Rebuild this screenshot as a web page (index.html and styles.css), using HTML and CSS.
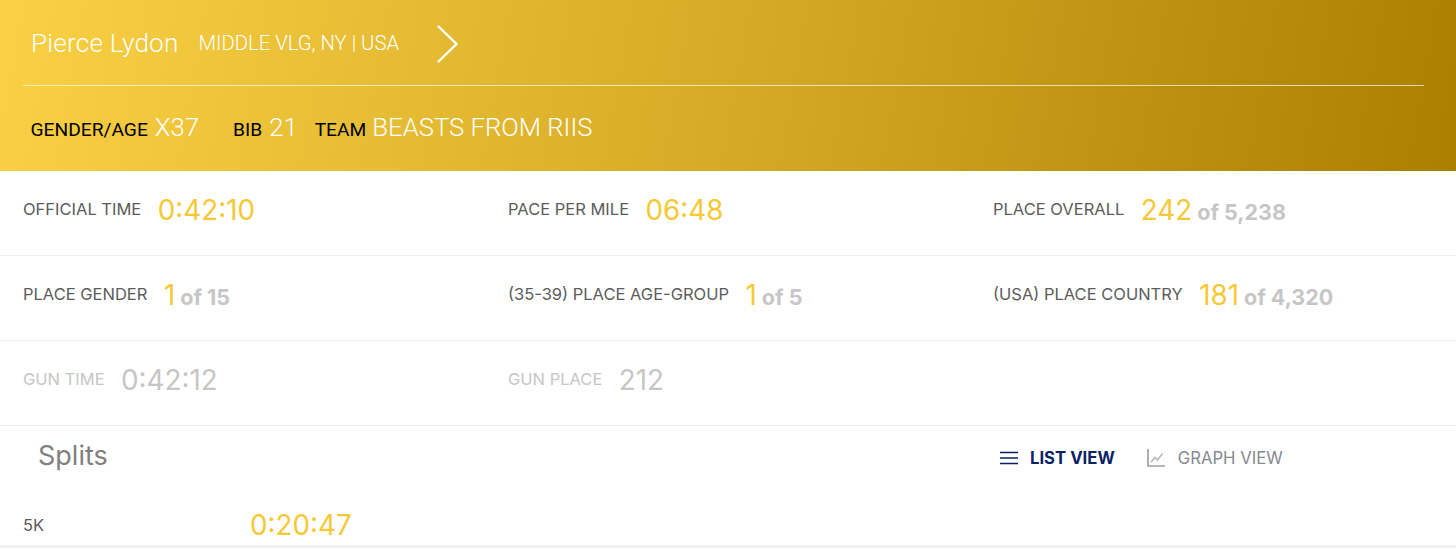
FILE: index.html
```html
<!DOCTYPE html>
<html lang="en">
<head>
<meta charset="utf-8">
<title>Pierce Lydon</title>
<link rel="stylesheet" href="styles.css">
</head>
<body>
<header class="hero">
  <div class="hero-top">
    <span class="name">Pierce Lydon</span>
    <span class="place">MIDDLE VLG, NY | USA</span>
    <svg class="chev" width="24" height="40" viewBox="0 0 24 40"><path d="M2.5 2.5 L20.5 20 L2.5 37.5" fill="none" stroke="#fff" stroke-width="2.4" stroke-linecap="round" stroke-linejoin="miter"/></svg>
  </div>
  <div class="hero-bottom">
    <span class="k">GENDER/AGE</span><span class="v v-age">X37</span>
    <span class="k">BIB</span><span class="v v-bib">21</span>
    <span class="k k-team">TEAM</span><span class="v">BEASTS FROM RIIS</span>
  </div>
</header>
<section class="stats">
  <div class="row">
    <div class="cell"><span class="label">OFFICIAL TIME</span><span class="val"><span class="num">0:42:10</span></span></div>
    <div class="cell"><span class="label">PACE PER MILE</span><span class="val"><span class="num">06:48</span></span></div>
    <div class="cell"><span class="label">PLACE OVERALL</span><span class="val"><span class="num">242</span><span class="of">of 5,238</span></span></div>
  </div>
  <div class="row">
    <div class="cell"><span class="label">PLACE GENDER</span><span class="val"><span class="num">1</span><span class="of">of 15</span></span></div>
    <div class="cell"><span class="label">(35-39) PLACE AGE-GROUP</span><span class="val"><span class="num">1</span><span class="of">of 5</span></span></div>
    <div class="cell"><span class="label">(USA) PLACE COUNTRY</span><span class="val"><span class="num">181</span><span class="of">of 4,320</span></span></div>
  </div>
  <div class="row muted">
    <div class="cell"><span class="label">GUN TIME</span><span class="val"><span class="num">0:42:12</span></span></div>
    <div class="cell"><span class="label">GUN PLACE</span><span class="val"><span class="num">212</span></span></div>
    <div class="cell"></div>
  </div>
</section>
<section class="splits">
  <div class="splits-head">
    <h2 class="title">Splits</h2>
    <div class="views">
      <span class="view active">
        <svg width="18" height="14" viewBox="0 0 18 14"><path d="M0 1.5H18M0 7H18M0 12.5H18" stroke="#0b2265" stroke-width="1.6" fill="none"/></svg>
        LIST VIEW
      </span>
      <span class="view">
        <svg width="18" height="18" viewBox="0 0 18 18"><path d="M1 0V17H18" stroke="#a0a0a0" stroke-width="1.7" fill="none"/><path d="M4 13L8 8.5L10.5 11L15.5 4.5" stroke="#b8b8b8" stroke-width="1.6" fill="none"/></svg>
        GRAPH VIEW
      </span>
    </div>
  </div>
  <div class="split-row">
    <span class="split-name">5K</span>
    <span class="split-time">0:20:47</span>
  </div>
</section>
</body>
</html>
```
FILE: styles.css
```css
* { box-sizing: border-box; }
html, body { margin: 0; padding: 0; }
body {
  width: 1456px;
  height: 550px;
  overflow: hidden;
  background: #fff;
  font-family: Inter, "Liberation Sans", sans-serif;
}
.hero {
  height: 171px;
  padding: 0 32px 0 23px;
  background: linear-gradient(100deg, #fad044 0%, #d9af2a 45%, #ab7f00 100%);
  color: #fff;
  font-family: Roboto, "Liberation Sans", sans-serif;
}
.hero-top {
  height: 86px;
  padding: 0 0 0 8px;
  display: flex;
  align-items: center;
  border-bottom: 1px solid rgba(255, 255, 255, 0.65);
}
.name { font-size: 26.1px; font-weight: 350; letter-spacing: 0.2px; margin-right: 20px; }
.place { font-size: 20.3px; font-weight: 350; margin-right: 37px; }
.chev { display: block; margin-top: 2px; }
.hero-bottom {
  height: 84px;
  padding: 0 0 0 7.5px;
  display: flex;
  align-items: baseline;
  line-height: 82px;
}
.k { font-size: 19.2px; font-weight: 400; color: #000; margin-right: 7px; }
.k-team { margin-right: 6px; }
.v { font-size: 25.7px; font-weight: 350; }
.v-age { margin-right: 34px; }
.v-bib { margin-right: 17px; }
.row {
  display: grid;
  grid-template-columns: 485px 485px 1fr;
  height: 85px;
  padding: 0 23px;
  border-bottom: 1px solid #eff0f3;
  align-items: center;
}
.cell { display: flex; align-items: center; padding-bottom: 7px; }
.val { display: flex; align-items: baseline; gap: 5px; }
.label { font-size: 16.5px; color: #5c5c5c; margin: 0 16.5px 2px 0; }
.num { font-size: 27.8px; color: #f7c835; font-weight: 400; }
.of { font-size: 21.5px; font-weight: 700; color: #c6c6c6; }
.muted .label { color: #c6c6c6; }
.muted .num { color: #c6c6c6; }
.splits { height: 122px; border-bottom: 3px solid #eff0f3; }
.splits-head {
  height: 62px;
  padding-left: 38px;
  display: grid;
  grid-template-columns: 962px 1fr;
  align-items: center;
}
.title { margin: 0; font-size: 27px; font-weight: 400; color: #808080; padding-bottom: 4px; }
.views { display: flex; gap: 32px; font-size: 16.7px; padding-top: 1px; }
.view { display: flex; align-items: center; gap: 13px; color: #86898f; }
.view.active { color: #0b2265; font-weight: 700; gap: 12px; }
.split-row { display: flex; align-items: center; padding: 16px 0 0 23px; height: 58px; }
.split-name { width: 227px; font-size: 16.5px; color: #5c5c5c; }
.split-time { font-size: 27.8px; color: #f7c835; }
```
